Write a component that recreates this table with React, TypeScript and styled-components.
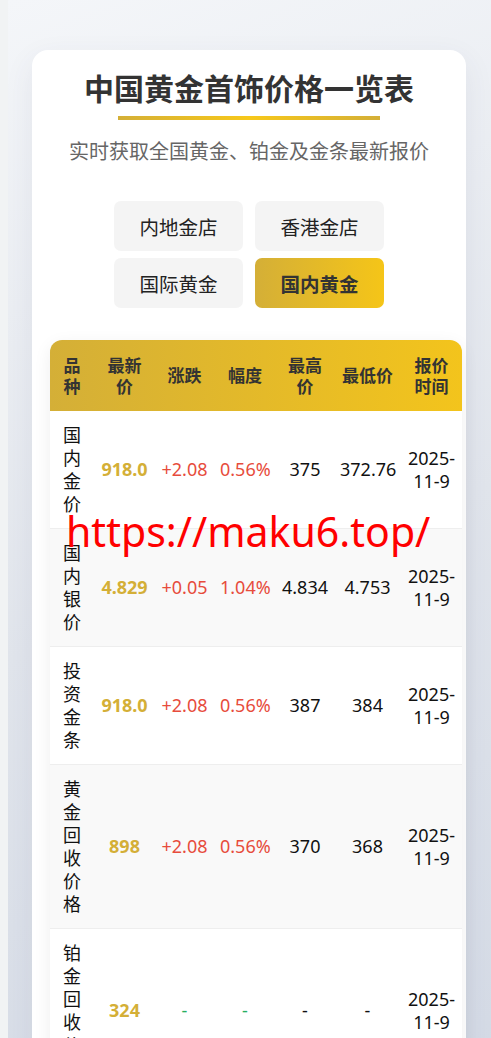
import React from "react";
import styled, { createGlobalStyle } from "styled-components";

const GlobalStyle = createGlobalStyle`
  html, body {
    margin: 0;
    padding: 0;
    background: #f1f3f4;
  }
  body {
    font-family: "Noto Sans", "Noto Sans CJK SC", sans-serif;
    color: #222;
  }
`;

const Page = styled.div`
  margin-left: 8px;
  min-height: 1200px;
  padding: 50px 25px 40px 24px;
  background: linear-gradient(160deg, #f4f6f9 0%, #e1e5ec 45%, #cfd6e3 100%);
`;

const Card = styled.div`
  background: #fff;
  border-radius: 16px;
  padding: 21px 18px 30px;
  box-shadow: 0 10px 30px rgba(60, 70, 100, 0.08);
`;

const Title = styled.h1`
  margin: 0;
  text-align: center;
  font-size: 30px;
  line-height: 36px;
  font-weight: 700;
  color: #333;
`;

const Underline = styled.div`
  width: 262px;
  height: 4px;
  margin: 9px auto 0;
  background: linear-gradient(90deg, #d4af37 0%, #f7c81a 50%, #d4af37 100%);
`;

const Subtitle = styled.p`
  margin: 17px 0 0;
  text-align: center;
  font-size: 20px;
  line-height: 30px;
  color: #666;
`;

const Tabs = styled.div`
  display: grid;
  grid-template-columns: 129px 129px;
  gap: 7px 12px;
  justify-content: center;
  margin-top: 34px;
`;

const Tab = styled.button<{ $active?: boolean }>`
  height: 50px;
  border: none;
  border-radius: 7px;
  font-family: inherit;
  font-size: 19.5px;
  font-weight: ${(p) => (p.$active ? 700 : 400)};
  color: ${(p) => (p.$active ? "#333" : "#222")};
  background: ${(p) =>
    p.$active ? "linear-gradient(90deg, #d4af37 0%, #f5c518 100%)" : "#f4f4f4"};
  cursor: pointer;
`;

const Table = styled.table`
  margin-top: 32px;
  width: 412px;
  table-layout: fixed;
  border-collapse: separate;
  border-spacing: 0;
  border-radius: 12px;
  overflow: hidden;
  background: linear-gradient(90deg, #d4af37 0%, #f3c41c 100%);
  box-shadow: 0 5px 18px rgba(0, 0, 0, 0.07);
`;

const Th = styled.th`
  padding: 14.5px 6px;
  font-size: 17px;
  line-height: 21px;
  font-weight: 700;
  color: #333;
  text-align: center;
  vertical-align: middle;
`;

const Row = styled.tr<{ $alt?: boolean }>`
  background: ${(p) => (p.$alt ? "#f9f9f9" : "#ffffff")};
`;

type Tone = "name" | "price" | "up" | "flat" | "plain";

const toneColor: Record<Tone, string> = {
  name: "#111",
  price: "#d4af37",
  up: "#e74c3c",
  flat: "#27ae60",
  plain: "#111",
};

const Td = styled.td<{ $tone: Tone; $alt?: boolean }>`
  padding: 12.5px 6px;
  font-size: 18px;
  line-height: 23px;
  text-align: center;
  vertical-align: middle;
  border-bottom: 1px solid #eeeeee;
  background: ${(p) => (p.$alt ? "#f9f9f9" : "#ffffff")};
  color: ${(p) => toneColor[p.$tone]};
  font-weight: ${(p) => (p.$tone === "price" ? 700 : 400)};
`;

const Watermark = styled.div`
  position: absolute;
  top: 511px;
  left: 66px;
  font-family: "Noto Sans", sans-serif;
  font-size: 41px;
  line-height: 1;
  color: #ff0000;
  white-space: nowrap;
  pointer-events: none;
`;

const tabs = [
  { label: "内地金店", active: false },
  { label: "香港金店", active: false },
  { label: "国际黄金", active: false },
  { label: "国内黄金", active: true },
];

const colWidths = [44, 61, 59, 62, 58, 67, 61];
const heads = ["品种", "最新价", "涨跌", "幅度", "最高价", "最低价", "报价时间"];

type Item = {
  name: string;
  price: string;
  change: string;
  pct: string;
  high: string;
  low: string;
  date: [string, string];
};

const rows: Item[] = [
  { name: "国内金价", price: "918.0", change: "+2.08", pct: "0.56%", high: "375", low: "372.76", date: ["2025-", "11-9"] },
  { name: "国内银价", price: "4.829", change: "+0.05", pct: "1.04%", high: "4.834", low: "4.753", date: ["2025-", "11-9"] },
  { name: "投资金条", price: "918.0", change: "+2.08", pct: "0.56%", high: "387", low: "384", date: ["2025-", "11-9"] },
  { name: "黄金回收价格", price: "898", change: "+2.08", pct: "0.56%", high: "370", low: "368", date: ["2025-", "11-9"] },
  { name: "铂金回收价格", price: "324", change: "-", pct: "-", high: "-", low: "-", date: ["2025-", "11-9"] },
];

export default function App() {
  return (
    <>
      <GlobalStyle />
      <Page>
        <Card>
          <Title>中国黄金首饰价格一览表</Title>
          <Underline />
          <Subtitle>实时获取全国黄金、铂金及金条最新报价</Subtitle>
          <Tabs>
            {tabs.map((t) => (
              <Tab key={t.label} $active={t.active}>
                {t.label}
              </Tab>
            ))}
          </Tabs>
          <Table>
            <colgroup>
              {colWidths.map((w, i) => (
                <col key={i} style={{ width: w }} />
              ))}
            </colgroup>
            <thead>
              <tr>
                {heads.map((h) => (
                  <Th key={h}>{h}</Th>
                ))}
              </tr>
            </thead>
            <tbody>
              {rows.map((r, i) => {
                const alt = i % 2 === 1;
                const flat = r.change === "-";
                return (
                  <Row key={r.name + i} $alt={alt}>
                    <Td $tone="name" $alt={alt}>{r.name}</Td>
                    <Td $tone="price" $alt={alt}>{r.price}</Td>
                    <Td $tone={flat ? "flat" : "up"} $alt={alt}>{r.change}</Td>
                    <Td $tone={flat ? "flat" : "up"} $alt={alt}>{r.pct}</Td>
                    <Td $tone="plain" $alt={alt}>{r.high}</Td>
                    <Td $tone="plain" $alt={alt}>{r.low}</Td>
                    <Td $tone="plain" $alt={alt}>
                      {r.date[0]}
                      <wbr />
                      {r.date[1]}
                    </Td>
                  </Row>
                );
              })}
            </tbody>
          </Table>
        </Card>
      </Page>
      <Watermark>https://maku6.top/</Watermark>
    </>
  );
}
